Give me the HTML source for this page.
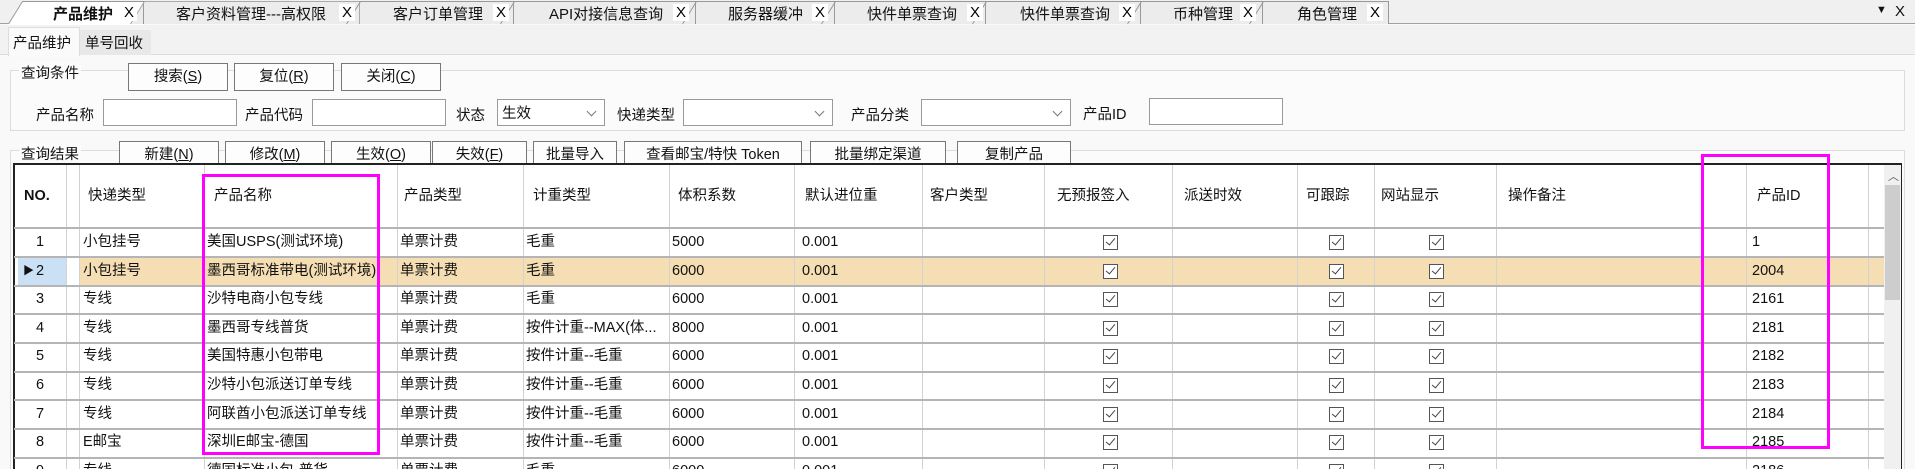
<!DOCTYPE html>
<html><head><meta charset="utf-8"><style>
*{margin:0;padding:0;box-sizing:border-box}
html{width:1915px;height:469px;overflow:hidden}
body{width:1915px;height:469px;overflow:hidden;background:#f9f9f9;font-family:"Liberation Sans","Noto Sans CJK SC",sans-serif;font-size:14.5px;color:#111;position:relative}
.a{position:absolute;white-space:nowrap}
.tab{position:absolute;top:1px;height:23px;background:#ececec;clip-path:polygon(14px 0,100% 0,100% 100%,0 100%);}
.x{position:absolute;top:4px;width:16px;height:17px;background:#fff;font-size:15px;line-height:17px;text-align:center;color:#000}
.btn{position:absolute;height:28px;border:1px solid #777;background:#fdfdfd;text-align:center;line-height:26px;font-size:14.5px}
.in{position:absolute;top:99px;height:27px;border:1px solid #9a9a9a;background:#fff}
.sel:after{content:"";position:absolute;right:9px;top:8px;width:6px;height:6px;border-right:1px solid #777;border-bottom:1px solid #777;transform:rotate(45deg)}
.vl{position:absolute;top:165px;height:304px;width:1px;background:#d2d2d2}
.hl{position:absolute;left:14px;width:1870px;height:2px;background:#b5b5b5}
.r{position:absolute;left:0;width:1884px;height:29px;line-height:29px}
.r span{position:absolute;white-space:nowrap}
.cb{position:absolute;top:7px;width:15px;height:15px;border:1.5px solid #555;background:#fff}
.cb:after{content:"";position:absolute;left:3.5px;top:0px;width:4px;height:8px;border-right:1.5px solid #444;border-bottom:1.5px solid #444;transform:rotate(40deg)}
u{text-decoration:underline}
</style></head><body>
<!-- tab strip -->
<div class="a" style="left:0;top:0;width:1915px;height:24px;background:#f0f0f0;border-bottom:1px solid #a0a0a0"></div>
<div class="tab" style="left:8px;width:136px;background:#fff"></div>
<div class="tab" style="left:130px;width:230px"></div>
<div class="tab" style="left:346px;width:168px"></div>
<div class="tab" style="left:500px;width:196px"></div>
<div class="tab" style="left:682px;width:153px"></div>
<div class="tab" style="left:821px;width:165px"></div>
<div class="tab" style="left:972px;width:169px"></div>
<div class="tab" style="left:1127px;width:136px"></div>
<div class="tab" style="left:1249px;width:140px"></div>
<svg class="a" style="left:0;top:0" width="1400" height="25"><g fill="none" stroke="#999" stroke-width="1">
<path d="M8.5 24L22.5 1.5H143.5V24"/>
<path d="M144 24 M130.5 24L144.5 1.5H359.5V24" stroke="#aaa"/>
<path d="M346.5 24L360.5 1.5H513.5V24"/>
<path d="M500.5 24L514.5 1.5H695.5V24"/>
<path d="M682.5 24L696.5 1.5H834.5V24"/>
<path d="M821.5 24L835.5 1.5H985.5V24"/>
<path d="M972.5 24L986.5 1.5H1140.5V24"/>
<path d="M1127.5 24L1141.5 1.5H1262.5V24"/>
<path d="M1249.5 24L1263.5 1.5H1388.5V24"/>
</g></svg>
<div class="a" style="left:8px;top:24px;width:136px;height:1px;background:#fff"></div>
<div class="a" style="left:53px;top:3px;font-weight:bold;font-size:15px">产品维护</div><div class="x" style="left:121px">X</div>
<div class="a" style="left:176px;top:3px;font-size:15px">客户资料管理---高权限</div><div class="x" style="left:339px">X</div>
<div class="a" style="left:393px;top:3px;font-size:15px">客户订单管理</div><div class="x" style="left:493px">X</div>
<div class="a" style="left:549px;top:3px;font-size:15px">API对接信息查询</div><div class="x" style="left:673px">X</div>
<div class="a" style="left:728px;top:3px;font-size:15px">服务器缓冲</div><div class="x" style="left:812px">X</div>
<div class="a" style="left:867px;top:3px;font-size:15px">快件单票查询</div><div class="x" style="left:967px">X</div>
<div class="a" style="left:1020px;top:3px;font-size:15px">快件单票查询</div><div class="x" style="left:1119px">X</div>
<div class="a" style="left:1173px;top:3px;font-size:15px">币种管理</div><div class="x" style="left:1240px">X</div>
<div class="a" style="left:1297px;top:3px;font-size:15px">角色管理</div><div class="x" style="left:1367px">X</div>
<div class="a" style="left:1876px;top:4px;font-size:11px">▼</div>
<div class="a" style="left:1895px;top:3px;font-size:15px">X</div>
<!-- sub tabs -->
<div class="a" style="left:0;top:25px;width:1915px;height:30px;background:#f2f2f2;border-bottom:1px solid #dcdcdc"></div>
<div class="a" style="left:8px;top:27px;width:72px;height:29px;background:#fafafa;border:1px solid #ddd;border-bottom:none;padding:4px 0 0 4px">产品维护</div>
<div class="a" style="left:80px;top:30px;width:71px;height:25px;background:#e8e8e8;padding:2px 0 0 5px">单号回收</div>
<!-- group 1 -->
<div class="a" style="left:10px;top:70px;width:1895px;height:61px;border:1px solid #dcdcdc;background:#fbfbfb"></div>
<div class="a" style="left:19px;top:62px;background:#fbfbfb;padding:0 2px">查询条件</div>
<div class="btn" style="left:128px;top:63px;width:100px">搜索(<u>S</u>)</div>
<div class="btn" style="left:234px;top:63px;width:100px">复位(<u>R</u>)</div>
<div class="btn" style="left:341px;top:63px;width:100px">关闭(<u>C</u>)</div>
<div class="a" style="left:36px;top:104px">产品名称</div><div class="in" style="left:103px;width:134px"></div>
<div class="a" style="left:245px;top:104px">产品代码</div><div class="in" style="left:312px;width:134px"></div>
<div class="a" style="left:456px;top:104px">状态</div><div class="in sel" style="left:497px;width:108px;padding:2px 4px">生效</div>
<div class="a" style="left:617px;top:104px">快递类型</div><div class="in sel" style="left:683px;width:150px"></div>
<div class="a" style="left:851px;top:104px">产品分类</div><div class="in sel" style="left:921px;width:150px"></div>
<div class="a" style="left:1083px;top:103px">产品ID</div><div class="in" style="left:1149px;top:98px;width:134px"></div>
<!-- group 2 -->
<div class="a" style="left:10px;top:150px;width:1895px;height:319px;border:1px solid #dcdcdc;border-bottom:none;background:#fbfbfb"></div>
<div class="a" style="left:19px;top:143px;background:#fbfbfb;padding:0 2px">查询结果</div>
<div class="btn" style="left:119px;top:141px;width:100px">新建(<u>N</u>)</div>
<div class="btn" style="left:225px;top:141px;width:100px">修改(<u>M</u>)</div>
<div class="btn" style="left:331px;top:141px;width:100px">生效(<u>O</u>)</div>
<div class="btn" style="left:432px;top:141px;width:95px">失效(<u>F</u>)</div>
<div class="btn" style="left:533px;top:141px;width:84px">批量导入</div>
<div class="btn" style="left:624px;top:141px;width:178px">查看邮宝/特快 Token</div>
<div class="btn" style="left:810px;top:141px;width:136px">批量绑定渠道</div>
<div class="btn" style="left:957px;top:141px;width:114px">复制产品</div>
<!-- table -->
<div class="a" style="left:13px;top:163px;width:1889px;height:306px;border:2px solid #222;border-bottom:none;background:#fff"></div>
<div class="a" style="left:18px;top:257px;width:48px;height:29px;background:#c9e0f5"></div>
<div class="a" style="left:79px;top:257px;width:1805px;height:29px;background:#f5deb3"></div>
<div class="vl" style="left:66px"></div><div class="vl" style="left:79px"></div><div class="vl" style="left:204px"></div>
<div class="vl" style="left:397px"></div><div class="vl" style="left:523px"></div><div class="vl" style="left:669px"></div>
<div class="vl" style="left:794px"></div><div class="vl" style="left:922px"></div><div class="vl" style="left:1044px"></div>
<div class="vl" style="left:1172px"></div><div class="vl" style="left:1297px"></div><div class="vl" style="left:1374px"></div>
<div class="vl" style="left:1496px"></div><div class="vl" style="left:1746px"></div><div class="vl" style="left:1868px"></div>
<div class="hl" style="top:227px"></div><div class="hl" style="top:256px"></div><div class="hl" style="top:285px"></div>
<div class="hl" style="top:313px"></div><div class="hl" style="top:342px"></div><div class="hl" style="top:371px"></div>
<div class="hl" style="top:399px"></div><div class="hl" style="top:428px"></div><div class="hl" style="top:457px"></div>
<div class="r" style="top:182px">
<span style="left:24px;font-weight:bold">NO.</span><span style="left:88px">快递类型</span><span style="left:214px">产品名称</span><span style="left:404px">产品类型</span><span style="left:533px">计重类型</span><span style="left:678px">体积系数</span><span style="left:805px">默认进位重</span><span style="left:930px">客户类型</span><span style="left:1057px">无预报签入</span><span style="left:1184px">派送时效</span><span style="left:1306px">可跟踪</span><span style="left:1381px">网站显示</span><span style="left:1508px">操作备注</span><span style="left:1757px">产品ID</span>
</div>
<div class="r" style="top:228px"><span style="left:36px">1</span><span style="left:83px">小包挂号</span><span style="left:207px">美国USPS(测试环境)</span><span style="left:400px">单票计费</span><span style="left:526px">毛重</span><span style="left:672px">5000</span><span style="left:802px">0.001</span><i class="cb" style="left:1103px"></i><i class="cb" style="left:1329px"></i><i class="cb" style="left:1429px"></i><span style="left:1752px">1</span></div>
<div class="r" style="top:257px"><span style="left:23px;font-size:11px">▶</span><span style="left:36px">2</span><span style="left:83px">小包挂号</span><span style="left:207px">墨西哥标准带电(测试环境)</span><span style="left:400px">单票计费</span><span style="left:526px">毛重</span><span style="left:672px">6000</span><span style="left:802px">0.001</span><i class="cb" style="left:1103px"></i><i class="cb" style="left:1329px"></i><i class="cb" style="left:1429px"></i><span style="left:1752px">2004</span></div>
<div class="r" style="top:285px"><span style="left:36px">3</span><span style="left:83px">专线</span><span style="left:207px">沙特电商小包专线</span><span style="left:400px">单票计费</span><span style="left:526px">毛重</span><span style="left:672px">6000</span><span style="left:802px">0.001</span><i class="cb" style="left:1103px"></i><i class="cb" style="left:1329px"></i><i class="cb" style="left:1429px"></i><span style="left:1752px">2161</span></div>
<div class="r" style="top:314px"><span style="left:36px">4</span><span style="left:83px">专线</span><span style="left:207px">墨西哥专线普货</span><span style="left:400px">单票计费</span><span style="left:526px">按件计重--MAX(体...</span><span style="left:672px">8000</span><span style="left:802px">0.001</span><i class="cb" style="left:1103px"></i><i class="cb" style="left:1329px"></i><i class="cb" style="left:1429px"></i><span style="left:1752px">2181</span></div>
<div class="r" style="top:342px"><span style="left:36px">5</span><span style="left:83px">专线</span><span style="left:207px">美国特惠小包带电</span><span style="left:400px">单票计费</span><span style="left:526px">按件计重--毛重</span><span style="left:672px">6000</span><span style="left:802px">0.001</span><i class="cb" style="left:1103px"></i><i class="cb" style="left:1329px"></i><i class="cb" style="left:1429px"></i><span style="left:1752px">2182</span></div>
<div class="r" style="top:371px"><span style="left:36px">6</span><span style="left:83px">专线</span><span style="left:207px">沙特小包派送订单专线</span><span style="left:400px">单票计费</span><span style="left:526px">按件计重--毛重</span><span style="left:672px">6000</span><span style="left:802px">0.001</span><i class="cb" style="left:1103px"></i><i class="cb" style="left:1329px"></i><i class="cb" style="left:1429px"></i><span style="left:1752px">2183</span></div>
<div class="r" style="top:400px"><span style="left:36px">7</span><span style="left:83px">专线</span><span style="left:207px">阿联酋小包派送订单专线</span><span style="left:400px">单票计费</span><span style="left:526px">按件计重--毛重</span><span style="left:672px">6000</span><span style="left:802px">0.001</span><i class="cb" style="left:1103px"></i><i class="cb" style="left:1329px"></i><i class="cb" style="left:1429px"></i><span style="left:1752px">2184</span></div>
<div class="r" style="top:428px;height:41px;overflow:hidden"><span style="left:36px">8</span><span style="left:83px">E邮宝</span><span style="left:207px">深圳E邮宝-德国</span><span style="left:400px">单票计费</span><span style="left:526px">按件计重--毛重</span><span style="left:672px">6000</span><span style="left:802px">0.001</span><i class="cb" style="left:1103px"></i><i class="cb" style="left:1329px"></i><i class="cb" style="left:1429px"></i><span style="left:1752px">2185</span></div>
<div class="a" style="left:0;top:459px;width:1884px;height:10px;overflow:hidden"><div class="r" style="top:-2px"><span style="left:36px">9</span><span style="left:83px">专线</span><span style="left:207px">德国标准小包-普货</span><span style="left:400px">单票计费</span><span style="left:526px">毛重</span><span style="left:672px">6000</span><span style="left:802px">0.001</span><i class="cb" style="left:1103px"></i><i class="cb" style="left:1329px"></i><i class="cb" style="left:1429px"></i><span style="left:1752px">2186</span></div></div>
<!-- scrollbar -->
<div class="a" style="left:1884px;top:165px;width:17px;height:304px;background:#f0f0f0"></div>
<div class="a" style="left:1888px;top:168px;font-size:11px;color:#555">︿</div>
<div class="a" style="left:1885px;top:185px;width:15px;height:115px;background:#cdcdcd"></div>
<!-- magenta boxes -->
<div class="a" style="left:202px;top:174px;width:178px;height:281px;border:3px solid #f0f"></div>
<div class="a" style="left:1701px;top:154px;width:129px;height:295px;border:3px solid #f0f"></div>
</body></html>
